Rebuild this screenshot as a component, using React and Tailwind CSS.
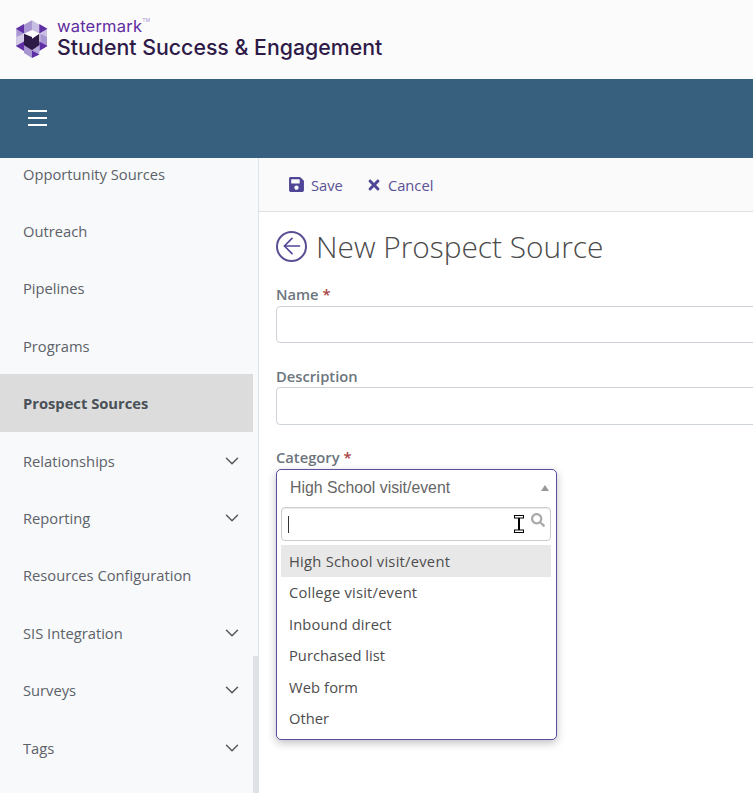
import React from "react";
import { ChevronDown, ArrowLeft } from "lucide-react";
import { FaSave, FaTimes, FaSearch } from "react-icons/fa";

const items = [
  ["Opportunity Sources", false],
  ["Outreach", false],
  ["Pipelines", false],
  ["Programs", false],
  ["Prospect Sources", false, true],
  ["Relationships", true],
  ["Reporting", true],
  ["Resources Configuration", false],
  ["SIS Integration", true],
  ["Surveys", true],
  ["Tags", true],
];

const options = [
  ["High School visit/event", "bg-[#e8e8e8] tracking-[0.25px]"],
  ["College visit/event", "tracking-[0.2px]"],
  ["Inbound direct", "tracking-[0.1px]"],
  ["Purchased list", ""],
  ["Web form", "tracking-[0.1px]"],
  ["Other", ""],
];

function Logo() {
  return (
    <svg width="34" height="38" viewBox="0 0 34 38" className="shrink-0">
      <polygon points="8,5.3 17,0.3 17,10 8.7,13.7" fill="#a796d2" />
      <polygon points="17,0.3 25.3,5.3 25.3,13.7 17,10" fill="#c9bfe3" />
      <polygon points="1.3,8.7 8,12 8.7,25 1.3,26" fill="#a796d2" />
      <polygon points="1.3,17 8.7,13.7 8.7,25 1.3,26" fill="#d4cbe9" />
      <polygon points="32,8.7 25.3,12 25.3,25 32,26" fill="#c9bfe3" />
      <polygon points="32,17 25.3,13.7 25.3,25 32,26" fill="#a796d2" />
      <polygon points="0.8,8.7 9,4 9,13.4" fill="#5f2fa5" />
      <polygon points="32.5,8.7 24.3,4 24.3,13.4" fill="#5f2fa5" />
      <polygon points="0.8,26 9,21.5 9,31" fill="#5f2fa5" />
      <polygon points="32.5,26 24.3,21.5 24.3,31" fill="#5f2fa5" />
      <polygon points="9,25 17,30.3 17,38 9,33" fill="#a796d2" />
      <polygon points="24.5,25 17,30.3 17,38 24.5,33" fill="#b5a7da" />
      <polygon points="17,30.5 24.5,34.5 17,38" fill="#5f2fa5" />
      <polygon points="9,13.7 17,17 24.3,13.7 24.3,25.3 17,30.3 9,25.3" fill="#2e1a47" />
      <polygon points="17,10.3 23.7,14.3 17,18.7" fill="#ffffff" />
    </svg>
  );
}

function IBeam() {
  return (
    <svg width="10" height="18" viewBox="0 0 10 18" className="absolute left-[232px] top-[7px]">
      <rect x="4" y="1" width="2" height="16" fill="#000000" />
      <rect x="0.5" y="0.5" width="9" height="2.5" fill="#ffffff" stroke="#000000" />
      <rect x="0.5" y="15" width="9" height="2.5" fill="#ffffff" stroke="#000000" />
    </svg>
  );
}

export default function App() {
  return (
    <div className="w-[753px] h-[793px] overflow-hidden bg-white flex flex-col font-['Open_Sans',sans-serif]">
      <header className="h-[79px] shrink-0 bg-[#fbfbfb] flex items-center pl-[15px] pb-[1px] gap-[8px]">
        <Logo />
        <div className="flex flex-col font-['Inter',sans-serif] mt-[-1px]">
          <div className="text-[#5f2ca0] text-[16.5px] leading-[17px] font-normal tracking-[0.2px]">
            watermark<sup className="text-[5px] text-[#a796d2] align-top leading-[10px]">TM</sup>
          </div>
          <div className="text-[#2e1a47] text-[21.3px] leading-[25px] font-medium whitespace-nowrap">Student Success &amp; Engagement</div>
        </div>
      </header>

      <div className="h-[79px] shrink-0 bg-[#37607f] flex items-center pl-[28px] pb-[2px]">
        <div className="w-[19px] flex flex-col gap-[5px]">
          <div className="h-[2px] bg-white" />
          <div className="h-[2px] bg-white" />
          <div className="h-[2px] bg-white" />
        </div>
      </div>

      <div className="flex-1 flex min-h-0">
        <aside className="relative w-[259px] shrink-0 bg-[#f8f9fb] border-r border-[#dee2e6] overflow-hidden">
          <nav className="w-[253px] mt-[-13.4px] flex flex-col">
            {items.map(([label, chevron, active]) => (
              <div
                key={label}
                className={`h-[57.4px] shrink-0 flex items-center justify-between pl-[23px] pr-[10px] pt-[0.8px] text-[14.72px] ${
                  active ? "bg-[#dcdcdc] font-bold text-[#495057]" : "text-[#5c6268]"
                }`}
              >
                <span>{label}</span>
                {chevron && <ChevronDown size={22} strokeWidth={1.6} className="text-[#55595e]" />}
              </div>
            ))}
          </nav>
          <div className="absolute right-0 top-[498px] bottom-0 w-[5px] bg-[#dee2e6]" />
        </aside>

        <main className="flex-1 min-w-0 flex flex-col">
          <div className="h-[54px] shrink-0 bg-[#fafafa] border-b border-[#e0e0e0] flex items-center pl-[29px] gap-[23px] pt-[1px] text-[14.72px] text-[#5a5195]">
            <div className="flex items-center gap-[6px]">
              <FaSave size={17} className="text-[#4f4596]" />
              <span>Save</span>
            </div>
            <div className="flex items-center gap-[6px]">
              <FaTimes size={16} className="text-[#4f4596]" />
              <span>Cancel</span>
            </div>
          </div>

          <div className="pl-[17px] flex flex-col">
            <div className="flex items-center gap-[9px] mt-[16px] h-[38px]">
              <div className="w-[31px] h-[31px] mb-[2px] shrink-0 rounded-full border-2 border-[#5a5195] flex items-center justify-center">
                <ArrowLeft size={26} strokeWidth={1.5} className="shrink-0 text-[#4f4596]" />
              </div>
              <h1 className="text-[29.85px] leading-[38px] text-[#4a4a4a] font-light whitespace-nowrap">New Prospect Source</h1>
            </div>

            <label className="mt-[18px] h-[20px] text-[14.72px] leading-[20px] font-semibold text-[#6c757d]">
              Name <span className="text-[#a94442]">*</span>
            </label>
            <div className="mt-[2px] h-[37px] w-[490px] border border-[#ced4da] rounded-[4px] bg-white" />

            <label className="mt-[23px] h-[20px] text-[14.72px] leading-[20px] font-semibold text-[#6c757d]">Description</label>
            <div className="mt-[1px] h-[38px] w-[490px] border border-[#ced4da] rounded-[4px] bg-white" />

            <label className="mt-[22px] h-[20px] text-[14.72px] leading-[20px] font-semibold text-[#6c757d]">
              Category <span className="text-[#a94442]">*</span>
            </label>

            <div className="mt-[2px] w-[281px] h-[271px] border border-[#5a4ea0] rounded-[5px] bg-white shadow-[0_3px_8px_rgba(0,0,0,0.25)] flex flex-col">
              <div className="h-[37px] shrink-0 flex items-center justify-between pl-[13px] pr-[7px] pb-[2px] font-['Liberation_Sans',sans-serif] text-[15.84px] text-[#666]">
                <span>High School visit/event</span>
                <span className="w-0 h-0 border-x-[4px] border-x-transparent border-b-[6px] border-b-[#999]" />
              </div>
              <div className="relative ml-[4px] mr-[5px] h-[34px] shrink-0 border border-[#ccc] rounded-[4px] shadow-[inset_0_1px_1px_rgba(0,0,0,0.08)] flex items-center justify-end pr-[5px]">
                <div className="absolute left-[6px] top-[8px] w-px h-[17px] bg-[#333]" />
                <IBeam />
                <FaSearch size={14} className="text-[#aaa] mb-[8px]" />
              </div>
              <div className="mt-[4px] ml-[4px] mr-[5px] flex flex-col text-[14.72px] text-[#4d4d4d]">
                {options.map(([o, cls]) => (
                  <div key={o} className={`h-[31.5px] flex items-center pl-[8px] ${cls}`}>
                    {o}
                  </div>
                ))}
              </div>
            </div>
          </div>
        </main>
      </div>
    </div>
  );
}
